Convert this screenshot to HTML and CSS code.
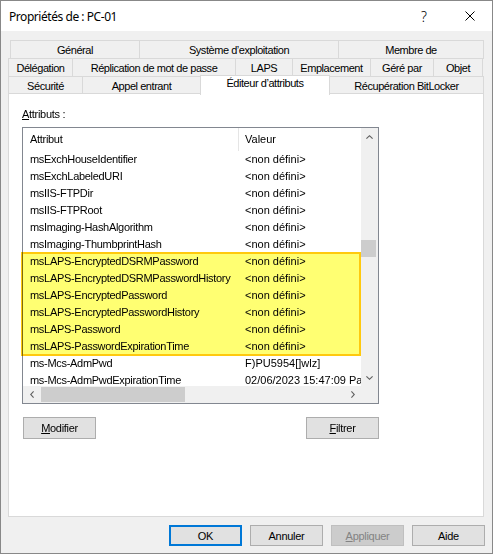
FILE: index.html
```html
<!DOCTYPE html>
<html lang="fr">
<head>
<meta charset="utf-8">
<title>Propriétés de : PC-01</title>
<link rel="stylesheet" href="styles.css">
</head>
<body>
<div class="window">
  <div class="titlebar">
    <span class="title">Propriétés de : PC-01</span>
    <span class="cap-btn help">?</span>
    <span class="cap-btn close">
      <svg width="10" height="10" viewBox="0 0 10 10"><path d="M0.5 0.5 L9.5 9.5 M9.5 0.5 L0.5 9.5" stroke="#000" stroke-width="1" fill="none"/></svg>
    </span>
  </div>
  <div class="body">
    <div class="tabs">
      <div class="tabrow r1">
        <div class="tab t-general">Général</div>
        <div class="tab t-systeme">Système d’exploitation</div>
        <div class="tab t-membre">Membre de</div>
      </div>
      <div class="tabrow r2">
        <div class="tab t-deleg">Délégation</div>
        <div class="tab t-repl">Réplication de mot de passe</div>
        <div class="tab t-laps">LAPS</div>
        <div class="tab t-empl">Emplacement</div>
        <div class="tab t-gere">Géré par</div>
        <div class="tab t-objet">Objet</div>
      </div>
      <div class="tabrow r3">
        <div class="tab t-secu">Sécurité</div>
        <div class="tab t-appel">Appel entrant</div>
        <div class="tab t-editeur active">Éditeur d’attributs</div>
        <div class="tab t-bitlocker">Récupération BitLocker</div>
      </div>
    </div>
    <div class="panel">
      <div class="label"><u>A</u>ttributs :</div>
      <div class="listbox">
        <div class="listmain">
          <div class="listview">
            <div class="lv-header">
              <div class="c1">Attribut</div>
              <div class="sep"></div>
              <div class="c2">Valeur</div>
            </div>
            <div class="lv-row"><div class="c1">msExchHouseIdentifier</div><div class="c2">&lt;non défini&gt;</div></div>
            <div class="lv-row"><div class="c1">msExchLabeledURI</div><div class="c2">&lt;non défini&gt;</div></div>
            <div class="lv-row"><div class="c1">msIIS-FTPDir</div><div class="c2">&lt;non défini&gt;</div></div>
            <div class="lv-row"><div class="c1">msIIS-FTPRoot</div><div class="c2">&lt;non défini&gt;</div></div>
            <div class="lv-row"><div class="c1">msImaging-HashAlgorithm</div><div class="c2">&lt;non défini&gt;</div></div>
            <div class="lv-row"><div class="c1">msImaging-ThumbprintHash</div><div class="c2">&lt;non défini&gt;</div></div>
            <div class="lv-row"><div class="c1">msLAPS-EncryptedDSRMPassword</div><div class="c2">&lt;non défini&gt;</div></div>
            <div class="lv-row"><div class="c1">msLAPS-EncryptedDSRMPasswordHistory</div><div class="c2">&lt;non défini&gt;</div></div>
            <div class="lv-row"><div class="c1">msLAPS-EncryptedPassword</div><div class="c2">&lt;non défini&gt;</div></div>
            <div class="lv-row"><div class="c1">msLAPS-EncryptedPasswordHistory</div><div class="c2">&lt;non défini&gt;</div></div>
            <div class="lv-row"><div class="c1">msLAPS-Password</div><div class="c2">&lt;non défini&gt;</div></div>
            <div class="lv-row"><div class="c1">msLAPS-PasswordExpirationTime</div><div class="c2">&lt;non défini&gt;</div></div>
            <div class="lv-row"><div class="c1">ms-Mcs-AdmPwd</div><div class="c2">F)PU5954[]wlz]</div></div>
            <div class="lv-row"><div class="c1">ms-Mcs-AdmPwdExpirationTime</div><div class="c2">02/06/2023 15:47:09 Paris, Madrid</div></div>
          </div>
          <div class="vscroll">
            <div class="sb-btn">
              <svg width="7" height="4" viewBox="0 0 7 4"><path d="M0 3.2 L3.5 0 L7 3.2 L6.2 4 L3.5 1.5 L0.8 4 Z" fill="#606060"/></svg>
            </div>
            <div class="sb-track v">
              <div class="sb-thumb v"></div>
            </div>
            <div class="sb-btn">
              <svg width="7" height="4" viewBox="0 0 7 4"><path d="M0 0.8 L3.5 4 L7 0.8 L6.2 0 L3.5 2.5 L0.8 0 Z" fill="#606060"/></svg>
            </div>
          </div>
        </div>
        <div class="hrow">
          <div class="hscroll">
            <div class="sb-btn">
              <svg width="4" height="7" viewBox="0 0 4 7"><path d="M3.2 0 L0 3.5 L3.2 7 L4 6.2 L1.5 3.5 L4 0.8 Z" fill="#606060"/></svg>
            </div>
            <div class="sb-track h">
              <div class="sb-thumb h"></div>
            </div>
            <div class="sb-btn">
              <svg width="4" height="7" viewBox="0 0 4 7"><path d="M0.8 0 L4 3.5 L0.8 7 L0 6.2 L2.5 3.5 L0 0.8 Z" fill="#606060"/></svg>
            </div>
          </div>
          <div class="corner"></div>
        </div>
        <div class="highlight"></div>
      </div>
      <div class="btnrow">
        <button class="btn"><u>M</u>odifier</button>
        <button class="btn"><u>F</u>iltrer</button>
      </div>
    </div>
    <div class="footer">
      <button class="btn fbtn default">OK</button>
      <button class="btn fbtn">Annuler</button>
      <button class="btn fbtn disabled"><u>A</u>ppliquer</button>
      <button class="btn fbtn">Aide</button>
    </div>
  </div>
</div>
</body>
</html>
```

FILE: styles.css
```css
* { box-sizing: border-box; }
html, body { margin: 0; padding: 0; }
body {
  width: 493px;
  height: 554px;
  background: #f0f0f0;
  font-family: "Liberation Sans", Arial, sans-serif;
  font-size: 11px;
  color: #000;
}
.window {
  width: 493px;
  height: 554px;
  border: 1px solid #888;
  background: #f0f0f0;
  display: flex;
  flex-direction: column;
}
.titlebar {
  flex: none;
  height: 30px;
  background: #fff;
  display: flex;
  align-items: center;
  padding-left: 8px;
}
.title {
  flex: 1;
  font-family: "Noto Sans", "Liberation Sans", sans-serif;
  font-size: 12px;
  letter-spacing: -0.45px;
  color: #000;
}
.cap-btn {
  height: 30px;
  display: flex;
  align-items: center;
  justify-content: center;
}
.help {
  width: 46px;
  font-family: "Noto Sans", sans-serif;
  font-size: 14px;
  font-weight: 300;
}
.close { width: 45px; }

.body {
  flex: 1;
  display: flex;
  flex-direction: column;
  padding: 9px 0 0 7px;
}

/* Tabs */
.tabs {
  height: 53px;
  display: flex;
  flex-direction: column;
}
.tabrow {
  display: flex;
  height: 18px;
}
.tabrow.r3 { height: 17px; }
.r1 { padding-left: 2px; }
.tab {
  flex: none;
  height: 19px;
  border: 1px solid #d9d9d9;
  border-bottom: none;
  margin-left: -1px;
  background: #f0f0f0;
  display: flex;
  align-items: center;
  justify-content: center;
  white-space: nowrap;
  letter-spacing: -0.45px;
  padding-bottom: 1px;
}
.r3 .tab { height: 18px; padding-bottom: 0; }
.tab:first-child { margin-left: 0; }
.tab.active {
  position: relative;
  z-index: 2;
  background: #fff;
  height: 20px;
  margin-top: -1px;
  padding-bottom: 5px;
}
.t-general { width: 130px; }
.t-systeme { width: 200px; }
.t-membre { width: 146px; }
.t-deleg { width: 65px; }
.t-repl { width: 164px; }
.t-laps { width: 58px; }
.t-empl { width: 79px; }
.t-gere { width: 64px; }
.t-objet { width: 50px; }
.t-secu { width: 75px; }
.t-appel { width: 119px; }
.t-editeur { width: 130px; }
.t-bitlocker { width: 155px; }

/* Panel */
.panel {
  position: relative;
  z-index: 1;
  width: 476px;
  height: 424px;
  background: #fff;
  border: 1px solid #d9d9d9;
  padding: 13px 13px 0 13px;
}
.label {
  height: 14px;
  line-height: 14px;
  margin-bottom: 6px;
  letter-spacing: -0.3px;
}

/* List box */
.listbox {
  position: relative;
  width: 357px;
  height: 277px;
  border: 1px solid #828790;
  background: #fff;
  display: flex;
  flex-direction: column;
}
.listmain {
  display: flex;
  height: 258px;
}
.listview {
  width: 338px;
  height: 258px;
  overflow: hidden;
}
.lv-header {
  display: flex;
  height: 23px;
  line-height: 22px;
}
.lv-header .sep {
  width: 1px;
  height: 23px;
  background: #e5e5e5;
}
.lv-row {
  display: flex;
  height: 17px;
  line-height: 17px;
}
.c1 {
  width: 215px;
  padding-left: 7px;
  white-space: nowrap;
  overflow: hidden;
  letter-spacing: -0.3px;
  flex: none;
}
.lv-row .c1 { width: 216px; }
.c2 {
  padding-left: 6px;
  white-space: nowrap;
  letter-spacing: 0;
  flex: none;
}
.vscroll {
  width: 17px;
  height: 258px;
  background: #f0f0f0;
  display: flex;
  flex-direction: column;
}
.sb-btn {
  width: 17px;
  height: 17px;
  flex: none;
  display: flex;
  align-items: center;
  justify-content: center;
}
.sb-track.v {
  flex: 1;
  padding-top: 95px;
}
.sb-thumb.v {
  width: 15px;
  height: 17px;
  background: #cdcdcd;
}
.hrow {
  display: flex;
  height: 17px;
}
.hscroll {
  width: 338px;
  height: 17px;
  background: #f0f0f0;
  display: flex;
}
.sb-track.h {
  flex: 1;
  padding: 1px 0 1px 1px;
}
.sb-thumb.h {
  width: 144px;
  height: 15px;
  background: #cdcdcd;
}
.corner {
  width: 17px;
  height: 17px;
  background: #f0f0f0;
}
.highlight {
  position: absolute;
  left: -2px;
  top: 124px;
  width: 340px;
  height: 104px;
  border: 2px solid #ffc90e;
  background: #ffff72;
  mix-blend-mode: multiply;
  pointer-events: none;
}

/* Buttons */
.btn {
  font-family: "Liberation Sans", Arial, sans-serif;
  font-size: 11px;
  letter-spacing: -0.3px;
  color: #000;
  background: #e1e1e1;
  border: 1px solid #adadad;
  width: 73px;
  height: 22px;
  padding: 0;
  margin: 0;
  display: flex;
  align-items: center;
  justify-content: center;
}
.btnrow {
  display: flex;
  justify-content: space-between;
  width: 356px;
  margin: 13px 0 0 1px;
}
.footer {
  display: flex;
  justify-content: flex-end;
  gap: 8px;
  margin-top: 8px;
  padding-right: 7px;
}
.fbtn { height: 21px; }
.fbtn.default { border: 2px solid #0078d7; }
.fbtn.disabled {
  background: #cccccc;
  border-color: #bfbfbf;
  color: #838383;
}
```
